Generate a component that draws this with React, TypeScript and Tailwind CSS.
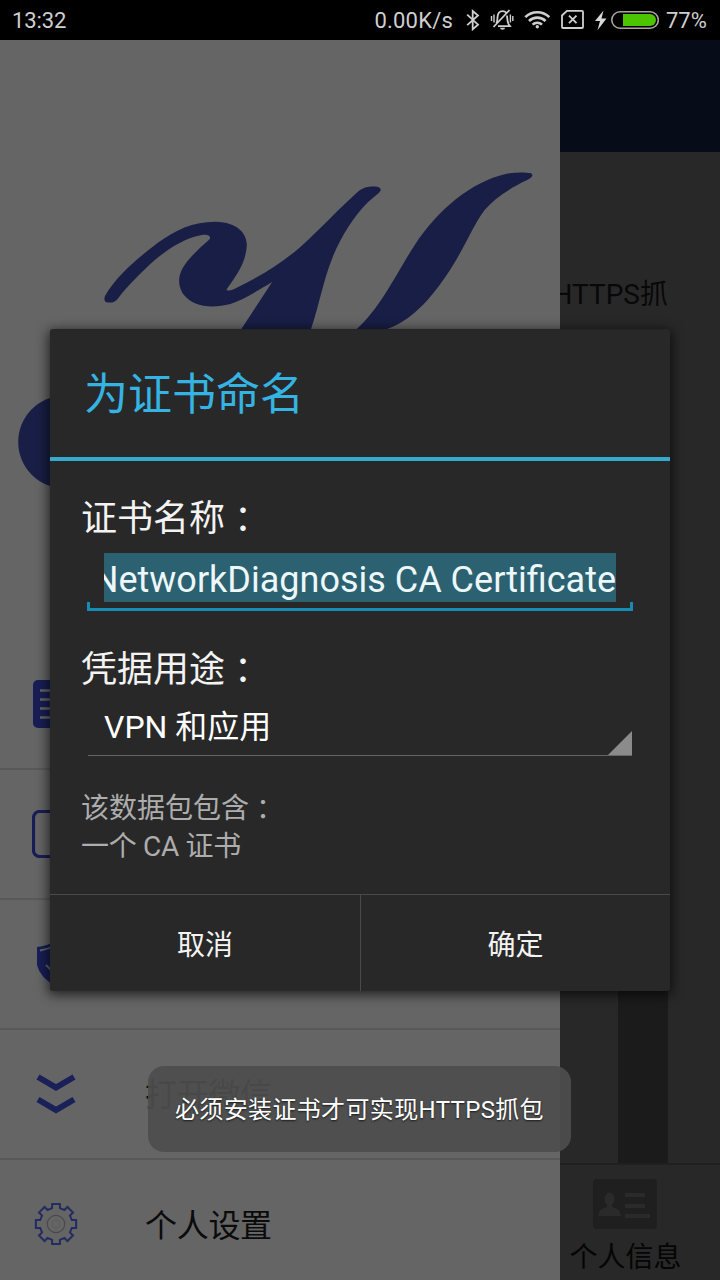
import type { ReactNode } from "react";

const sans = "font-['Roboto','Noto_Sans_CJK_SC',sans-serif]";

function StatusBar() {
  return (
    <header className="flex h-10 shrink-0 items-center bg-black pl-3 pr-3 pt-[2px] text-[22px] leading-10 text-[#cfcfcf]">
      <span className="tracking-[-0.1px]">13:32</span>
      <span className="ml-auto w-[79px] whitespace-nowrap text-right tracking-[0.2px]">0.00K/s</span>
      <svg className="-mt-[2px] ml-[13px] h-10 w-[14px]" viewBox="466 0 14 40" fill="none" stroke="#cfcfcf" strokeWidth="1.8">
        <path d="M467.200 14.700 478 24.700l-5.300 4.500V11l5.300 4.500-10.800 9.700" />
      </svg>
      <svg className="-mt-[2px] ml-[10px] h-10 w-[24px]" viewBox="490 0 24 40" fill="none" stroke="#cfcfcf" strokeWidth="1.8">
        <path d="M493.5 27 509.5 10M496.500 23.500c1-2 .8-4 1-6.300.300-4 2.300-6 5-6 1.600 0 2.800.5 3.800 1.700M507 15.500c.3 3.500.2 6 1.600 8.700l1.400 2h-12" />
        <path d="M491.500 16v5M494 14.500v8M510.400 14.500v8M512.800 16v5" strokeWidth="1.400" />
        <path d="M500 27.800h5a2.500 2 0 0 1-5 0Z" fill="#cfcfcf" stroke="none" />
      </svg>
      <svg className="-mt-[2px] ml-[10px] h-10 w-[27px]" viewBox="524 0 27 40" fill="none" stroke="#cfcfcf" strokeWidth="2.600">
        <path d="M525.300 17.200a17 17 0 0 1 24 0M529 21a12 12 0 0 1 16.600 0M532.600 24.600a6.800 6.800 0 0 1 9.400 0" />
        <circle cx="537.300" cy="26.800" r="1.700" fill="#cfcfcf" stroke="none" />
      </svg>
      <svg className="-mt-[2px] ml-[10px] h-10 w-[23px]" viewBox="561 0 23 40" fill="none" stroke="#cfcfcf" strokeWidth="1.800">
        <path d="M567 10.900h15a1 1 0 0 1 1 1V27a1 1 0 0 1-1 1h-19a1 1 0 0 1-1-1V15.500Z" />
        <path d="m569 15.700 7.500 7.500M576.500 15.700l-7.500 7.500" />
      </svg>
      <svg className="-mt-[2px] ml-[11px] h-10 w-[12px]" viewBox="595 0 12 40">
        <path d="M603.500 10.500 595 21h5l-2.500 9.300L606.500 18.500h-5Z" fill="#d8d8d8" />
      </svg>
      <svg className="-mt-[2px] ml-1 h-10 w-12" viewBox="611 0 48 40">
        <rect x="611.800" y="11.800" width="46.500" height="16.400" rx="8.200" fill="none" stroke="#aaa5a0" strokeWidth="1.600" />
        <path d="M623 14h27a6 6 0 0 1 0 12h-27Z" fill="#4dc400" />
      </svg>
      <span className="ml-[7px] w-[42px] whitespace-nowrap">77%</span>
    </header>
  );
}

function Logo() {
  return (
    <svg className="mt-[110px] block h-[370px] w-[560px] shrink-0" viewBox="0 0 1568 1110" preserveAspectRatio="none" fill="#181e45">
      <path d="M294 438C330 370 395 318 440 280C490 240 540 215 604 215C665 217 692 250 691 287C688 345 655 385 634 419C640 424 650 421 660 415C740 373 800 330 845 287C895 238 950 175 1002 125C1020 109 1040 108 1056 110C1070 114 1068 124 1057 132L1030 157C990 200 955 260 932 320C905 390 895 460 870 540H674L762 396C725 420 680 450 645 462C590 477 540 470 512 431C492 395 502 360 532 325C555 296 580 275 588 266C589 253 577 253 565 255C510 266 460 304 420 343C390 374 355 410 332 443C323 458 310 460 296 456Q290 450 294 438Z" />
      <path d="M996 540C1065 475 1110 370 1160 287C1225 180 1320 95 1416 72C1440 66 1470 66 1487 70C1495 76 1490 83 1476 90C1430 113 1385 144 1357 180C1325 225 1310 275 1260 360C1205 450 1150 515 1076 540Z" />
      <ellipse cx="180" cy="876" rx="129" ry="139" />
    </svg>
  );
}

function DrawerRow({ icon, label, last = false }: { icon: ReactNode; label?: string; last?: boolean }) {
  return (
    <div className={`flex h-[130px] shrink-0 items-center pl-8 ${last ? "" : "border-b-2 border-[#595959]"}`}>
      <div className="flex w-[113px] shrink-0">{icon}</div>
      <span className="mt-px text-[32px] leading-none tracking-[-0.3px] text-[#0b0b0b]">{label}</span>
    </div>
  );
}

const gearPath = Array.from({ length: 8 }, (_, i) => {
  const pt = (r: number, deg: number) => {
    const a = ((i * 45 + deg - 90) * Math.PI) / 180;
    return `${(24 + r * Math.cos(a)).toFixed(2)} ${(24 + r * Math.sin(a)).toFixed(2)}`;
  };
  return `${i === 0 ? "M" : "L"}${pt(16.3, -14)}L${pt(20.5, -11)}L${pt(20.5, 11)}L${pt(16.3, 14)}`;
}).join("") + "Z";

function Drawer() {
  return (
    <aside className="flex w-[560px] shrink-0 flex-col overflow-hidden bg-[#656565]">
      <Logo />
      <div className="mt-[120px] flex flex-col">
        <DrawerRow
          icon={
            <svg className="h-12 w-12" viewBox="0 0 48 48">
              <rect x="1" width="46" height="48" rx="5" fill="#181e55" />
              <path d="M8 10.500h32M8 19.500h32M8 28.500h32M8 37.500h32" stroke="#656565" strokeWidth="2.500" />
            </svg>
          }
        />
        <DrawerRow
          icon={
            <svg className="h-12 w-12" viewBox="0 0 48 48">
              <rect x="1.500" y="1.500" width="45" height="45" rx="6" fill="none" stroke="#181e55" strokeWidth="3.200" />
            </svg>
          }
        />
        <DrawerRow
          icon={
            <svg className="h-12 w-12" viewBox="0 0 48 48">
              <path d="M5 7Q15 6 24 1Q33 6 43 7V25Q40 38 24 46Q8 38 5 25Z" fill="#181e55" />
              <path d="M8 10.500Q16 9.500 24 5M14 25l8 8 14-15" stroke="#656565" strokeWidth="2" fill="none" />
            </svg>
          }
        />
        <DrawerRow
          label="打开微信"
          icon={
            <svg className="h-12 w-12" viewBox="0 0 48 48" fill="none" stroke="#1a2058" strokeWidth="6">
              <path d="M6 7 24 17.500 42 7M6 29.500 24 40 42 29.500" />
            </svg>
          }
        />
        <DrawerRow
          last
          label="个人设置"
          icon={
            <svg className="-mt-[2px] h-12 w-12" viewBox="0 0 48 48" fill="none">
              <path d={gearPath} stroke="#252b60" strokeWidth="2" />
              <circle cx="24" cy="24" r="8.700" stroke="#4a4a4a" strokeWidth="1.200" />
              <circle cx="24" cy="24" r="4" stroke="#5b5b5b" strokeWidth="0.800" />
            </svg>
          }
        />
      </div>
    </aside>
  );
}

function MainPage() {
  return (
    <main className="flex min-w-0 grow flex-col overflow-hidden bg-[#282828]">
      <div className="h-28 shrink-0 bg-[#070c19]" />
      <div className="flex h-[284px] shrink-0 justify-end pr-[52px] pt-[125px] text-[28px] leading-9 text-[#080808]">
        <span className="shrink-0 whitespace-nowrap">HTTPS抓</span>
      </div>
      <div className="flex grow pl-[58px]">
        <div className="w-[50px] bg-[#1b1b1b]" />
      </div>
      <nav className="flex h-[117px] shrink-0 flex-col items-center border-t-2 border-[#202020] pr-[30px] pt-[14px]">
        <svg className="h-[50px] w-16 shrink-0" viewBox="0 0 64 50">
          <rect width="64" height="50" rx="4" fill="#1f1f1f" />
          <g fill="#2a2a2a">
            <ellipse cx="16.500" cy="20" rx="5" ry="6.500" />
            <path d="M14 24h5v4q8 1 9 9H5q1-8 9-9Z" />
            <path d="M32 14h20v4H32zM32 25h20v4H32zM32 35h25v4H32z" />
          </g>
        </svg>
        <span className="ml-px mt-[11px] whitespace-nowrap text-[28px] leading-9 text-[#050505]">个人信息</span>
      </nav>
    </main>
  );
}

function Colon() {
  return (
    <span lang="zh-TW" className="align-[-2px] font-['Noto_Sans_CJK_TC',sans-serif] leading-none">
      ：
    </span>
  );
}

function CertificateDialog() {
  return (
    <section className="absolute left-[50px] top-[330px] flex h-[661px] w-[620px] flex-col rounded-[3px] bg-[#282828] shadow-[0_2px_12px_2px_rgba(0,0,0,0.65),0_-1px_0_0_#343434]">
      <h1 className="flex h-[131px] shrink-0 items-center border-b-4 border-[#36a9ce] pl-[34px] pt-[3px] text-[44px] font-normal leading-none text-[#35b4e3]">
        为证书命名
      </h1>
      <div className="flex grow flex-col pl-[31px] pr-[37px] pt-[33px]">
        <label className="block h-[50px] text-[36px] leading-[50px] text-[#f3f3f3]">
          证书名称
          <Colon />
        </label>
        <div className="ml-[6px] mt-[9px] flex h-[58px] w-[546px] flex-col">
          <div className="ml-[17px] flex h-[49px] w-[512px] shrink-0 justify-end overflow-hidden bg-[#2b6170]">
            <span className="shrink-0 whitespace-nowrap text-[36px] leading-[54px] text-[#edf7fa]">
              NetworkDiagnosis CA Certificate
            </span>
          </div>
          <div className="h-[9px] border-x-[3px] border-b-[3px] border-[#168bb4]" />
        </div>
        <label className="mt-[34px] block h-[50px] text-[36px] leading-[50px] text-[#f3f3f3]">
          凭据用途
          <Colon />
        </label>
        <div className="ml-[7px] mt-[6px] flex h-[55px] w-[544px] items-end justify-between border-b border-[#666666] pl-4">
          <span className="self-start text-[32px] leading-[52px] text-white">VPN 和应用</span>
          <svg className="h-6 w-6" viewBox="0 0 24 24">
            <path d="M24 0V24H0Z" fill="#8b8b8b" />
          </svg>
        </div>
        <p className="mt-[34px] text-[28px] leading-[38px] text-[#adadad]">
          该数据包包含
          <Colon />
          <br />
          <span className="tracking-[-0.3px]">一个 CA 证书</span>
        </p>
      </div>
      <div className="flex h-[97px] shrink-0 border-t border-[#4a4a4a] text-[28px] text-[#f3f3f3]">
        <button className="w-[311px] border-r border-[#4a4a4a] pt-[5px]">取消</button>
        <button className="w-[309px] pt-[5px]">确定</button>
      </div>
    </section>
  );
}

function Toast() {
  return (
    <div className="absolute left-[148px] top-[1066px] flex h-[86px] w-[423px] items-center justify-center whitespace-nowrap rounded-2xl bg-[rgba(77,77,77,0.93)] pt-[2px] text-[24px] tracking-[0.35px] text-white [text-shadow:0_1px_2px_rgba(0,0,0,0.7)]">
      必须安装证书才可实现HTTPS抓包
    </div>
  );
}

export default function App() {
  return (
    <div lang="zh-CN" className={`relative flex h-[1280px] w-[720px] flex-col overflow-hidden bg-black ${sans}`}>
      <StatusBar />
      <div className="flex min-h-0 grow">
        <Drawer />
        <MainPage />
      </div>
      <CertificateDialog />
      <Toast />
    </div>
  );
}
